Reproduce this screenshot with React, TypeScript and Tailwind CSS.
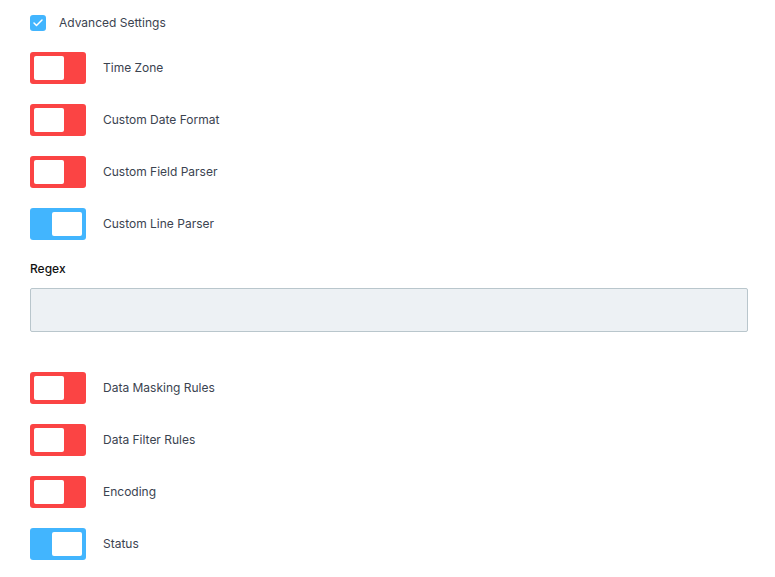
import { Check } from 'lucide-react';

interface ToggleRowProps {
  label: string;
  on: boolean;
}

function ToggleRow({ label, on }: ToggleRowProps) {
  return (
    <div className="flex items-center h-8">
      <div
        className={`w-14 h-8 rounded-[3px] p-1 flex ${on ? 'bg-[#42b5fe] justify-end' : 'bg-[#fb4444] justify-start'}`}
      >
        <div className="w-[30px] h-6 bg-white rounded-[2px]" />
      </div>
      <span className="ml-[17px] text-[12px] text-[#3b4350]">{label}</span>
    </div>
  );
}

export default function App() {
  return (
    <div className="w-[775px] h-[577px] bg-white pl-[30px] pr-[27px] pt-[15px] font-['Inter','Roboto',sans-serif]">
      <div className="flex items-center h-4">
        <div className="w-4 h-4 rounded-[3px] bg-[#42b5fe] flex items-center justify-center">
          <Check className="w-3 h-3 text-white" strokeWidth={3} />
        </div>
        <span className="ml-[13px] text-[12px] text-[#3b4350]">Advanced Settings</span>
      </div>

      <div className="mt-[21px] flex flex-col gap-5">
        <ToggleRow label="Time Zone" on={false} />
        <ToggleRow label="Custom Date Format" on={false} />
        <ToggleRow label="Custom Field Parser" on={false} />
        <ToggleRow label="Custom Line Parser" on={true} />
      </div>

      <div className="mt-[20px] text-[12px] font-medium text-[#111]">Regex</div>
      <div className="mt-[10px] h-[44px] w-full bg-[#edf1f4] border border-[#b9c6cc] rounded-[2px]" />

      <div className="mt-[40px] flex flex-col gap-5">
        <ToggleRow label="Data Masking Rules" on={false} />
        <ToggleRow label="Data Filter Rules" on={false} />
        <ToggleRow label="Encoding" on={false} />
        <ToggleRow label="Status" on={true} />
      </div>
    </div>
  );
}
